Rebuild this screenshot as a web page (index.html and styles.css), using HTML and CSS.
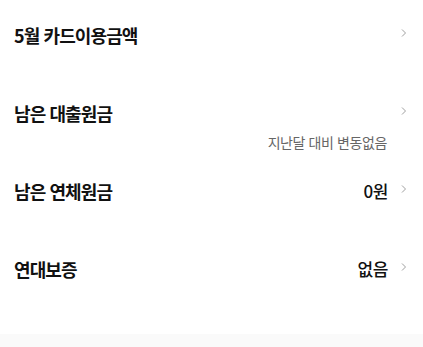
FILE: index.html
```html
<!DOCTYPE html>
<html lang="ko">
<head>
<meta charset="utf-8">
<link rel="stylesheet" href="styles.css">
</head>
<body>
<div class="sheet">
  <ul class="list">
    <li class="item">
      <div class="line">
        <span class="label">5월 카드이용금액</span>
        <span class="right"><svg class="chev" viewBox="0 0 6 10" width="6" height="10"><path d="M1 1.5 L4.5 5 L1 8.5" fill="none" stroke="#a0a0a0" stroke-width="1"/></svg></span>
      </div>
    </li>
    <li class="item">
      <div class="line">
        <span class="label">남은 대출원금</span>
        <span class="right"><svg class="chev" viewBox="0 0 6 10" width="6" height="10"><path d="M1 1.5 L4.5 5 L1 8.5" fill="none" stroke="#a0a0a0" stroke-width="1"/></svg></span>
      </div>
      <div class="sub">지난달 대비 변동없음</div>
    </li>
    <li class="item">
      <div class="line">
        <span class="label">남은 연체원금</span>
        <span class="right"><span class="value">0원</span><svg class="chev" viewBox="0 0 6 10" width="6" height="10"><path d="M1 1.5 L4.5 5 L1 8.5" fill="none" stroke="#a0a0a0" stroke-width="1"/></svg></span>
      </div>
    </li>
    <li class="item">
      <div class="line">
        <span class="label">연대보증</span>
        <span class="right"><span class="value">없음</span><svg class="chev" viewBox="0 0 6 10" width="6" height="10"><path d="M1 1.5 L4.5 5 L1 8.5" fill="none" stroke="#a0a0a0" stroke-width="1"/></svg></span>
      </div>
    </li>
  </ul>
</div>
<div class="footer"></div>
</body>
</html>
```
FILE: styles.css
```css
html, body {
  margin: 0;
  padding: 0;
  background: #fafafa;
}
body {
  font-family: "Noto Sans CJK KR", "Noto Sans", sans-serif;
  color: #111;
}
.sheet {
  background: #fff;
  height: 334px;
}
.list {
  list-style: none;
  margin: 0;
  padding: 0 16px 0 14px;
}
.item {
  box-sizing: border-box;
  height: 78px;
  padding-top: 25px;
}
.line {
  display: flex;
  align-items: center;
  justify-content: space-between;
  height: 20px;
}
.label {
  font-size: 18px;
  font-weight: 700;
  letter-spacing: -0.9px;
  line-height: 20px;
}
.right {
  display: flex;
  align-items: center;
  gap: 13px;
}
.value {
  font-size: 17px;
  font-weight: 500;
  line-height: 20px;
  letter-spacing: -0.4px;
}
.chev {
  display: block;
  margin-top: -5px;
}
.sub {
  margin-top: 11px;
  margin-right: 20px;
  text-align: right;
  font-size: 14px;
  line-height: 16px;
  color: #666;
  letter-spacing: -0.4px;
}
.footer {
  height: 13px;
  background: #fafafa;
}
```
